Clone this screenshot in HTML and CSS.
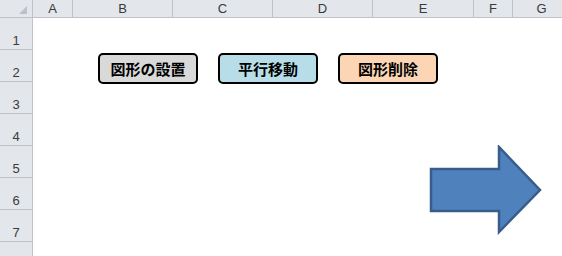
FILE: index.html
```html
<!DOCTYPE html>
<html>
<head>
<title>Sheet1</title>
<link rel="stylesheet" href="styles.css">
</head>
<body>

<div class="sheet">
	<div class="corner"><span class="corner_mark"></span></div>
	<div class="col_head">
		<div class="col c_a">A</div>
		<div class="col c_b">B</div>
		<div class="col c_c">C</div>
		<div class="col c_d">D</div>
		<div class="col c_e">E</div>
		<div class="col c_f">F</div>
		<div class="col c_g">G</div>
	</div>
	<div class="row_head">
		<div class="row">1</div>
		<div class="row">2</div>
		<div class="row">3</div>
		<div class="row">4</div>
		<div class="row">5</div>
		<div class="row">6</div>
		<div class="row">7</div>
		<div class="row"></div>
	</div>
	<div class="canvas">
		<button class="shape_btn btn_place">図形の設置</button>
		<button class="shape_btn btn_move">平行移動</button>
		<button class="shape_btn btn_delete">図形削除</button>
		<svg class="arrow" width="114" height="90" viewBox="0 0 114 90">
			<polygon points="2,24 70,24 70,2 111,45 70,87 70,66 2,66" fill="#4f81bd" stroke="#385d8a" stroke-width="2.5" stroke-linejoin="miter"/>
		</svg>
	</div>
</div>

</body>
</html>
```

FILE: styles.css
```css
	body
	{
		margin : 0;
		background-color : white;
		font-family : "Liberation Sans", "Noto Sans CJK JP", sans-serif;
	}
	.sheet
	{
		display : grid;
		grid-template-columns : 33px 1fr;
		grid-template-rows : 18px 1fr;
		width : 562px;
		height : 256px;
		overflow : hidden;
	}
	.corner
	{
		position : relative;
		background-color : #e3e6ea;
		border-right : 1px solid #bfc3c8;
		border-bottom : 1px solid #bfc3c8;
		box-sizing : border-box;
	}
	.corner_mark
	{
		position : absolute;
		right : 5px;
		bottom : 3px;
		width : 0;
		height : 0;
		border-left : 8px solid transparent;
		border-bottom : 8px solid #bcc1c7;
	}
	.col_head
	{
		display : flex;
		background-color : #e3e6ea;
		border-bottom : 1px solid #bfc3c8;
		box-sizing : border-box;
	}
	.col
	{
		flex : none;
		box-sizing : border-box;
		border-right : 1px solid #bfc3c8;
		text-align : center;
		font-size : 13px;
		line-height : 17px;
		color : #3a3a3a;
	}
	.c_a { width : 40px; }
	.c_b { width : 100px; }
	.c_c { width : 100px; }
	.c_d { width : 100px; }
	.c_e { width : 101px; }
	.c_f { width : 39px; }
	.c_g { flex : 1; border-right : none; padding-left : 8px; }
	.row_head
	{
		display : flex;
		flex-direction : column;
		background-color : #e3e6ea;
		border-right : 1px solid #bfc3c8;
		box-sizing : border-box;
	}
	.row
	{
		flex : none;
		height : 32px;
		box-sizing : border-box;
		border-bottom : 1px solid #bfc3c8;
		display : flex;
		align-items : flex-end;
		justify-content : center;
		padding-bottom : 1px;
		font-size : 13px;
		color : #3a3a3a;
	}
	.canvas
	{
		position : relative;
		background-color : white;
	}
	.shape_btn
	{
		position : absolute;
		top : 35px;
		width : 100px;
		height : 31px;
		box-sizing : border-box;
		border : 2px solid #000;
		border-radius : 5px;
		font-family : "Noto Sans CJK JP", sans-serif;
		font-weight : bold;
		font-size : 15px;
		line-height : 1;
		color : #000;
		padding : 0;
	}
	.btn_place
	{
		left : 65px;
		background-color : #d9d9d9;
	}
	.btn_move
	{
		left : 185px;
		background-color : #b7dee8;
	}
	.btn_delete
	{
		left : 305px;
		background-color : #fcd5b4;
	}
	.arrow
	{
		position : absolute;
		left : 396px;
		top : 127px;
	}
```
